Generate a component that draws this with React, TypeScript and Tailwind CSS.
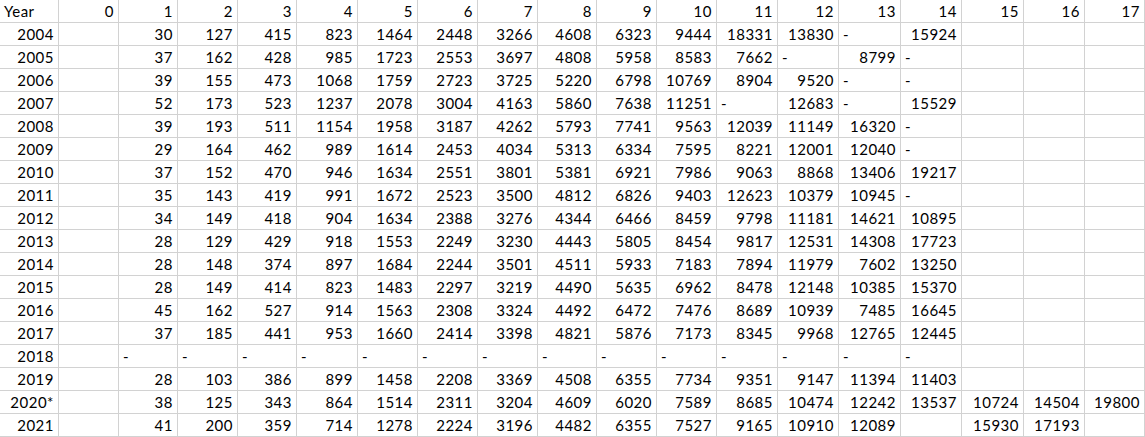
const header = ["Year", "0", "1", "2", "3", "4", "5", "6", "7", "8", "9", "10", "11", "12", "13", "14", "15", "16", "17"];

// year, then columns 0..17
const rows: string[][] = [
  ["2004", "", "30", "127", "415", "823", "1464", "2448", "3266", "4608", "6323", "9444", "18331", "13830", "-", "15924", "", "", ""],
  ["2005", "", "37", "162", "428", "985", "1723", "2553", "3697", "4808", "5958", "8583", "7662", "-", "8799", "-", "", "", ""],
  ["2006", "", "39", "155", "473", "1068", "1759", "2723", "3725", "5220", "6798", "10769", "8904", "9520", "-", "-", "", "", ""],
  ["2007", "", "52", "173", "523", "1237", "2078", "3004", "4163", "5860", "7638", "11251", "-", "12683", "-", "15529", "", "", ""],
  ["2008", "", "39", "193", "511", "1154", "1958", "3187", "4262", "5793", "7741", "9563", "12039", "11149", "16320", "-", "", "", ""],
  ["2009", "", "29", "164", "462", "989", "1614", "2453", "4034", "5313", "6334", "7595", "8221", "12001", "12040", "-", "", "", ""],
  ["2010", "", "37", "152", "470", "946", "1634", "2551", "3801", "5381", "6921", "7986", "9063", "8868", "13406", "19217", "", "", ""],
  ["2011", "", "35", "143", "419", "991", "1672", "2523", "3500", "4812", "6826", "9403", "12623", "10379", "10945", "-", "", "", ""],
  ["2012", "", "34", "149", "418", "904", "1634", "2388", "3276", "4344", "6466", "8459", "9798", "11181", "14621", "10895", "", "", ""],
  ["2013", "", "28", "129", "429", "918", "1553", "2249", "3230", "4443", "5805", "8454", "9817", "12531", "14308", "17723", "", "", ""],
  ["2014", "", "28", "148", "374", "897", "1684", "2244", "3501", "4511", "5933", "7183", "7894", "11979", "7602", "13250", "", "", ""],
  ["2015", "", "28", "149", "414", "823", "1483", "2297", "3219", "4490", "5635", "6962", "8478", "12148", "10385", "15370", "", "", ""],
  ["2016", "", "45", "162", "527", "914", "1563", "2308", "3324", "4492", "6472", "7476", "8689", "10939", "7485", "16645", "", "", ""],
  ["2017", "", "37", "185", "441", "953", "1660", "2414", "3398", "4821", "5876", "7173", "8345", "9968", "12765", "12445", "", "", ""],
  ["2018", "", "-", "-", "-", "-", "-", "-", "-", "-", "-", "-", "-", "-", "-", "-", "", "", ""],
  ["2019", "", "28", "103", "386", "899", "1458", "2208", "3369", "4508", "6355", "7734", "9351", "9147", "11394", "11403", "", "", ""],
  ["2020*", "", "38", "125", "343", "864", "1514", "2311", "3204", "4609", "6020", "7589", "8685", "10474", "12242", "13537", "10724", "14504", "19800"],
  ["2021", "", "41", "200", "359", "714", "1278", "2224", "3196", "4482", "6355", "7527", "9165", "10910", "12089", "", "15930", "17193", ""],
];

function Cell({ value, left }: { value: string; left?: boolean }) {
  const alignLeft = left || value === "-";
  return (
    <div
      className={
        "h-[23px] border-r border-b border-[#d2d2d2] overflow-hidden whitespace-nowrap leading-[22px] " +
        (alignLeft ? "text-left pl-[4px]" : "text-right pr-[4px]")
      }
    >
      {value}
    </div>
  );
}

export default function App() {
  return (
    <div className="w-[1145px] h-[437px] bg-white overflow-hidden">
      <div
        className="grid grid-cols-[59px_60px_59px_60px_59px_61px_60px_60px_60px_59px_60px_60px_61px_61px_62px_61px_62px_61px_60px] text-[15px] text-black tracking-[0.5px]"
        style={{ fontFamily: "Lato, 'Liberation Sans', sans-serif" }}
      >
        {header.map((h, i) => (
          <Cell key={"h" + i} value={h} left={i === 0} />
        ))}
        {rows.map((r, ri) =>
          r.map((v, ci) => <Cell key={ri + "-" + ci} value={v} />)
        )}
      </div>
    </div>
  );
}
